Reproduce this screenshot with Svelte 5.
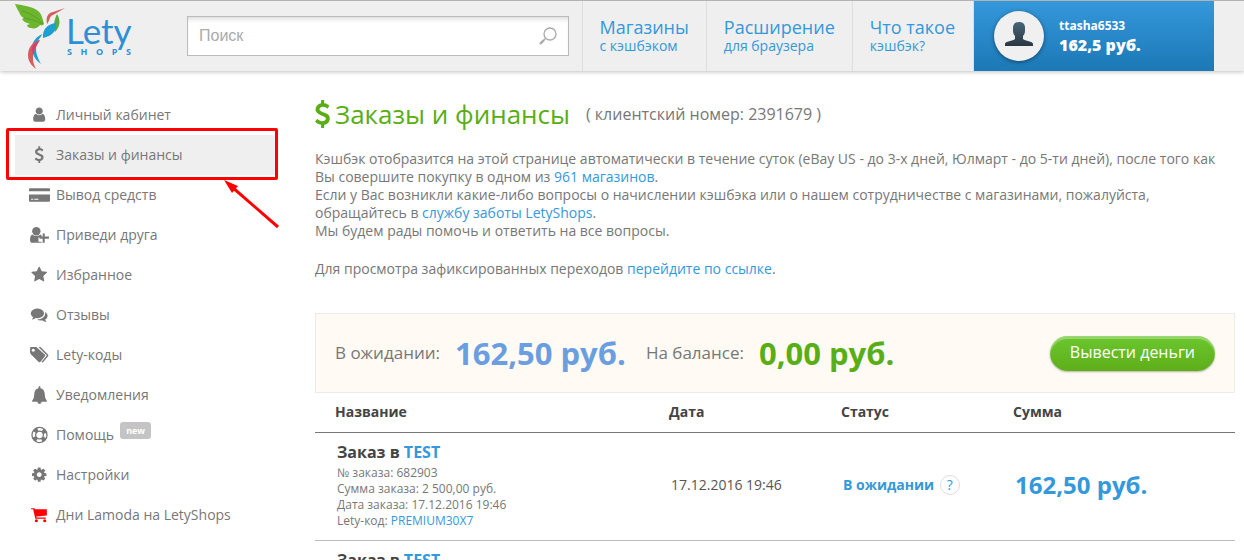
<script>
  const nav = [
    { title: "Магазины", note: "с кэшбэком" },
    { title: "Расширение", note: "для браузера" },
    { title: "Что такое", note: "кэшбэк?" }
  ];

  const menu = [
    { icon: "user", label: "Личный кабинет" },
    { icon: "dollar", label: "Заказы и финансы", active: true },
    { icon: "card", label: "Вывод средств" },
    { icon: "invite", label: "Приведи друга" },
    { icon: "star", label: "Избранное" },
    { icon: "comments", label: "Отзывы" },
    { icon: "tags", label: "Lety-коды" },
    { icon: "bell", label: "Уведомления" },
    { icon: "help", label: "Помощь", badge: "new" },
    { icon: "cog", label: "Настройки" },
    { icon: "cart", label: "Дни Lamoda на LetyShops" }
  ];

  const order = {
    shop: "TEST",
    number: "682903",
    total: "2 500,00 руб.",
    date: "17.12.2016 19:46",
    code: "PREMIUM30X7",
    status: "В ожидании",
    sum: "162,50 руб."
  };
  const orders = [order, order];

  let query = "";

  const dollarPath =
    "M1362 1185q0 153-99.5 263.5t-258.5 136.5v175q0 14-9 23t-23 9h-135q-13 0-22.5-9.5t-9.5-22.5v-175q-66-9-127.5-31t-101.5-44.5-74-48-46.5-37.5-17.5-18q-17-21-2-41l103-135q7-10 23-12 15-2 24 9l2 2q113 99 243 125 37 8 74 8 81 0 142.5-43t61.5-122q0-28-15-53t-33.5-42-58.5-37.5-66-32-80-32.5q-39-16-61.5-25t-61.5-26.5-62.5-31-56.5-35.5-53.5-42.5-43.5-49-35.5-58-21-66.5-8.5-78q0-138 98-242t255-134v-180q0-13 9.5-22.5t22.5-9.5h135q14 0 23 9t9 23v176q57 6 110.5 23t87 33.5 63.5 37.5 39 29 15 14q17 18 5 38l-81 146q-8 15-23 16-14 3-27-7-3-3-14.5-12t-39-26.5-58.5-32-74.5-26-85.5-11.5q-95 0-155 43t-60 111q0 26 8.5 48t29.5 41.5 39.5 33 56 31 60.5 27 70 27.5q53 20 81 31.5t76 35 75.5 42.5 62 50 53 63.5 31.5 76.5 13 94z";
  const userPath =
    "M1536 1399q0 109-62.5 187t-150.5 78h-854q-88 0-150.5-78t-62.5-187q0-85 8.5-160.5t31.5-152 58.5-131 94-89 134.5-34.5q131 128 313 128t313-128q76 0 134.5 34.5t94 89 58.5 131 31.5 152 8.5 160.5zm-256-887q0 159-112.5 271.5t-271.5 112.5-271.5-112.5-112.5-271.5 112.5-271.5 271.5-112.5 271.5 112.5 112.5 271.5z";
  const starPath =
    "M1728 647q0 22-26 48l-363 354 86 500q1 7 1 20 0 21-10.5 35.5t-30.5 14.5q-19 0-40-12l-449-236-449 236q-22 12-40 12-21 0-31.5-14.5t-10.5-35.5q0-6 2-20l86-500-364-354q-25-27-25-48 0-37 56-46l502-73 225-455q19-41 49-41t49 41l225 455 502 73q56 9 56 46z";
  const commentsPath =
    "M1408 768q0 139-94 257t-256.5 186.5-353.5 68.5q-86 0-176-16-124 88-278 128-36 9-86 16h-3q-11 0-20.5-8t-11.5-21q-1-3-1-6.5t.5-6.5 2-6l2.5-5 3.5-5.5 4-5 4.5-5 4-4.5q5-6 23-25t26-29.5 22.5-29 25-38.5 20.5-44q-124-72-195-177t-71-224q0-139 94-257t256.5-186.5 353.5-68.5 353.5 68.5 256.5 186.5 94 257zm384 256q0 120-71 224.5t-195 176.5q10 24 20.5 44t25 38.5 22.5 29 26 29.5 23 25q1 1 4 4.5t4.5 5 4 5 3.5 5.5l2.5 5 2 6 .5 6.5-1 6.5q-3 14-13 22t-22 7q-50-7-86-16-154-40-278-128-90 16-176 16-271 0-472-132 58 4 88 4 161 0 309-45t264-129q125-92 192-212t67-254q0-77-23-152 129 71 204 178t75 230z";
  const cogPath =
    "M1152 896q0-106-75-181t-181-75-181 75-75 181 75 181 181 75 181-75 75-181zm512-109v222q0 12-8 23t-20 13l-185 28q-19 54-39 91 35 50 107 138 10 12 10 25t-9 23q-27 37-99 108t-94 71q-12 0-26-9l-138-108q-44 23-91 38-16 136-29 186-7 28-36 28h-222q-14 0-24.5-8.5t-11.5-21.5l-28-184q-49-16-90-37l-141 107q-10 9-25 9-14 0-25-11-126-114-165-168-7-10-7-23 0-12 8-23 15-21 51-66.5t54-70.5q-27-50-41-99l-183-27q-13-2-21-12.5t-8-23.5v-222q0-12 8-23t19-13l186-28q14-46 39-92-40-57-107-138-10-12-10-24 0-10 9-23 26-36 98.5-107.5t94.5-71.5q13 0 26 10l138 107q44-23 91-38 16-136 29-186 7-28 36-28h222q14 0 24.5 8.5t11.5 21.5l28 184q49 16 90 37l142-107q9-9 24-9 13 0 25 10 129 119 165 170 7 8 7 22 0 12-8 23-15 21-51 66.5t-54 70.5q26 50 41 98l183 28q13 2 21 12.5t8 23.5z";
  const big = { user: userPath, dollar: dollarPath, star: starPath, comments: commentsPath, cog: cogPath };
</script>

<style>
  :global(body) {
    margin: 0;
    background: #fff;
    color: #777;
    font: 14px/18px "Open Sans", "Noto Sans", sans-serif;
  }
  a {
    color: #3498db;
    text-decoration: none;
  }
  header {
    display: flex;
    height: 70px;
    padding: 0 30px 0 14px;
    border-top: 1px solid #b4b2b2;
    background: #efefef;
    box-shadow: 0 1px 4px rgba(0, 0, 0, 0.25);
  }
  .logo {
    display: flex;
    width: 173px;
  }
  .logo-mark {
    width: 52px;
    height: 70px;
  }
  .logo-text {
    padding-top: 9px;
    color: #2d8fd5;
  }
  .lety {
    display: block;
    font: 35px/40px Lato, sans-serif;
  }
  .shops {
    display: flex;
    justify-content: space-between;
    width: 64px;
    padding-left: 1px;
    font: bold 9px/10px "Open Sans", sans-serif;
    margin-top: -3px;
  }
  .search {
    position: relative;
    flex: 1;
    margin: 15px 13px 0 0;
  }
  .search input {
    box-sizing: border-box;
    width: 100%;
    height: 40px;
    padding: 0 45px 0 11px;
    border: 1px solid #bbb;
    border-radius: 0;
    background: #fff;
    box-shadow: inset 0 5px 5px -3px rgba(0, 0, 0, 0.15);
    color: #777;
    font: 16px "Liberation Sans", Arial, sans-serif;
    outline: none;
  }
  .search input::placeholder {
    color: #aaa;
    opacity: 1;
  }
  .search button {
    position: absolute;
    top: 8px;
    right: 9px;
    width: 24px;
    height: 24px;
    padding: 0;
    border: 0;
    background: none;
  }
  nav {
    display: flex;
    padding-right: 1px;
    border-right: 1px solid #dedede;
  }
  nav a {
    box-sizing: border-box;
    padding: 16px 17px 0;
    border-left: 1px solid #dedede;
  }
  nav b {
    display: block;
    font-size: 18px;
    font-weight: normal;
    line-height: 20px;
  }
  .profile {
    display: flex;
    box-sizing: border-box;
    width: 240px;
    padding: 10px 20px;
    gap: 15px;
    background: linear-gradient(#3498db, #1c78b6);
    color: #fff;
    font-weight: bold;
  }
  .avatar {
    width: 50px;
    height: 50px;
    border-radius: 50%;
    background: #f0f0f0;
    box-shadow: 0 1px 4px rgba(0, 0, 0, 0.45);
  }
  .profile small {
    display: block;
    padding-top: 6px;
    font-size: 12px;
    line-height: 18px;
  }
  .profile strong {
    font-size: 16px;
    line-height: 20px;
  }

  .layout {
    display: grid;
    grid-template-columns: 260px minmax(0, 1fr);
    gap: 40px;
    padding: 24px 9px 0 15px;
  }
  aside ul {
    margin: 0;
    padding: 0;
    list-style: none;
  }
  aside li {
    position: relative;
  }
  aside li a {
    display: flex;
    align-items: center;
    height: 40px;
    padding-left: 14px;
    color: #777;
  }
  aside li.active a {
    background: #efefef;
  }
  aside svg {
    flex: none;
  }
  .icon {
    width: 21px;
    height: 21px;
    margin-right: 6px;
    fill: #777;
    overflow: visible;
  }
  .icon.cart {
    fill: #f00;
  }
  .badge {
    align-self: flex-start;
    margin: 7px 0 0 6px;
    padding: 0 6px;
    border-radius: 3px;
    background: #c4c4c4;
    color: #fff;
    font-size: 9px;
    font-weight: bold;
    line-height: 17px;
  }
  /* red marker drawn over the current item */
  .frame {
    position: absolute;
    inset: -7px -3px -5px -9px;
    border: 3px solid #f00;
    border-radius: 2px;
    pointer-events: none;
  }
  .arrow {
    position: absolute;
    top: 45px;
    right: -5px;
    pointer-events: none;
  }

  h1 {
    display: flex;
    align-items: center;
    margin: 0 0 17px;
    color: #59ae16;
    font-size: 26px;
    font-weight: normal;
    line-height: 38px;
  }
  h1 svg {
    margin-right: 5px;
    fill: #59ae16;
  }
  h1 small {
    margin-left: 16px;
    color: #777;
    font-size: 16px;
  }
  p {
    margin: 0 0 20px;
    padding-right: 18px;
  }
  .balance {
    display: flex;
    align-items: center;
    box-sizing: border-box;
    height: 80px;
    margin-top: 35px;
    padding: 0 19px;
    border: 1px solid #ebebeb;
    background: #fffaf4;
    font-size: 17px;
  }
  .balance strong {
    margin: 0 20px 0 15px;
    color: #6b9ee0;
    font-size: 31px;
    line-height: 40px;
  }
  .balance strong.ready {
    color: #59ae16;
  }
  .balance button {
    height: 35px;
    margin-left: auto;
    padding: 0 20px 2px;
    border: 0;
    border-radius: 18px;
    background: linear-gradient(#6cc72f, #5eae1a);
    box-shadow: inset 0 3px 1px rgba(255, 255, 255, 0.3), 0 1px 2px rgba(0, 0, 0, 0.3);
    color: #fff;
    font: 16px "Open Sans", "Noto Sans", sans-serif;
  }
  table {
    width: 100%;
    border-collapse: collapse;
    table-layout: fixed;
  }
  th {
    box-sizing: border-box;
    height: 39px;
    padding: 0 20px;
    border-bottom: 1px solid #777;
    color: #444;
    text-align: left;
  }
  th:first-child {
    width: 334px;
  }
  th:nth-child(2),
  th:nth-child(3) {
    width: 172px;
  }
  td {
    padding: 9px 0 11px 22px;
    border-bottom: 1px solid #bbb;
    color: #555;
    white-space: nowrap;
  }
  td h2 {
    margin: 0 0 2px;
    color: #444;
    font-size: 16px;
    line-height: 21px;
  }
  td div {
    color: #777;
    font-size: 12px;
    line-height: 16px;
  }
  .status {
    color: #3498db;
    font-weight: bold;
  }
  .status button {
    box-sizing: border-box;
    width: 20px;
    height: 20px;
    margin-left: 2px;
    padding: 0;
    border: 1px solid #ddd;
    border-radius: 50%;
    background: #fff;
    color: #3498db;
    font: 14px/18px "Open Sans", "Noto Sans", sans-serif;
  }
  .sum {
    color: #3498db;
    font-size: 24px;
    font-weight: bold;
  }
</style>

<header>
  <a class="logo" href="#home" aria-label="Lety Shops">
    <svg class="logo-mark" viewBox="0 0 52 70">
      <path fill="#6cb52d" d="M1 3c7 1 13 2 18 4 5 2 8 5 9 9l2 7c-1 1-2 2-4 1-2 3-6 4-9 3-2 0-4-1-4-3l3-1c-4-1-7-3-8-5l2-1c-3-1-4-4-5-6C3 8 2 5 1 3z" />
      <path fill="none" stroke="#4f9c2c" stroke-width=".8" d="M8 10c8 2 16 7 21 13M10 17c7 1 13 3 18 6" />
      <path fill="#d95c5c" d="M33 23c-1-6 0-11 6-12L51 7l-12 7c-4 1-3 6-6 9z" />
      <path fill="#57ad42" d="M43 13c4 6 3 13-2 18-2-5-1-12 2-18z" />
      <path fill="#1d9fd5" d="M42 22c1 8-4 13-13 15-1-9 5-14 13-15z" />
      <path fill="#1d9fd5" d="M28 33c-8 4-12 11-9 19 1 5 4 8 8 11-5-9-6-15-4-21 1-4 4-5 5-9z" />
      <path fill="#d95c5c" d="M26 39c-8 2-12 8-12 15 0 6 3 10 8 14-3-6-4-10-2-17 1-5 4-8 6-12z" />
      <path fill="#cf4467" d="M26 39c-5 2-9 6-8 12l2 3c0-6 3-11 6-15z" />
    </svg>
    <span class="logo-text">
      <span class="lety">Lety</span>
      <span class="shops"><span>S</span><span>H</span><span>O</span><span>P</span><span>S</span></span>
    </span>
  </a>
  <form class="search" on:submit|preventDefault>
    <input type="text" placeholder="Поиск" aria-label="Поиск" bind:value={query} />
    <button type="submit" aria-label="Найти">
      <svg width="24" height="24" fill="none" stroke="#aaa">
        <circle cx="14" cy="10" r="6" stroke-width="1.3" />
        <path d="M9.5 14.5L7.5 16.5" stroke-width="1.3" />
        <path d="M8 16l-4 4" stroke-width="2.4" />
      </svg>
    </button>
  </form>
  <nav>
    {#each nav as item}
      <a href="#nav"><b>{item.title}</b>{item.note}</a>
    {/each}
  </nav>
  <a class="profile" href="#profile">
    <svg class="avatar" viewBox="0 0 50 50">
      <defs>
        <linearGradient id="head" x2="0" y2="1">
          <stop stop-color="#47657a" />
          <stop offset="1" stop-color="#2b3741" />
        </linearGradient>
      </defs>
      <path fill="url(#head)" d="M25 11c4 0 6 2 6 6v3c0 2-1 4-2 5v3c2 2 10 2 10 5v2H11v-2c0-3 8-3 10-5v-3c-1-1-2-3-2-5v-3c0-4 2-6 6-6z" />
    </svg>
    <span><small>ttasha6533</small><strong>162,5 руб.</strong></span>
  </a>
</header>

<div class="layout">
  <aside>
    <ul>
      {#each menu as item}
        <li class:active={item.active}>
          <a href="#menu">
            {#if big[item.icon]}
              <svg class="icon" viewBox="-192 -128 2240 2240"><path d={big[item.icon]} /></svg>
            {:else if item.icon === "card"}
              <svg class="icon" viewBox="0 0 20 20">
                <path d="M1 3h18q1 0 1 1v2H0V4q0-1 1-1zM0 9h20v6q0 1-1 1H1q-1 0-1-1zm2 4v1h2v-1zm3 0v1h4v-1z" fill-rule="evenodd" />
              </svg>
            {:else if item.icon === "invite"}
              <svg class="icon" viewBox="0 0 20 20">
                <circle cx="7" cy="6" r="4" />
                <path d="M3 9q4 3 8 0l1 1v2H9v4h3v1H3q-2 0-2-3 0-4 2-5z" />
                <path d="M13 8h2v3h4v2h-4v4h-2v-4h-3v-2h3z" />
              </svg>
            {:else if item.icon === "tags"}
              <svg class="icon" viewBox="0 0 20 20">
                <path d="M2 2h5l8 7q1 1 0 2l-4 5q-1 1-2 0L2 9Q1 8 1 7V3q0-1 1-1zm2 1.500a1.500 1.500 0 1 0 .1 0z" fill-rule="evenodd" />
                <path d="M9 2h2l7 7q1 1 0 2l-5 6-1-1 5-6z" />
              </svg>
            {:else if item.icon === "bell"}
              <svg class="icon" viewBox="0 0 20 20">
                <path d="M10 1q1 0 1 2 4 1 4 6 0 4 2 6v1H3v-1q2-2 2-6 0-5 4-6 0-2 1-2zM8 16h4q0 2-2 2t-2-2z" />
              </svg>
            {:else if item.icon === "help"}
              <svg class="icon" viewBox="0 0 20 20">
                <g fill="none" stroke="#777">
                  <circle cx="10" cy="9.500" r="7.200" stroke-width="1.200" />
                  <circle cx="10" cy="9.500" r="3.700" stroke-width="1.200" />
                  <circle cx="10" cy="9.500" r="5.500" stroke-width="4" stroke-dasharray="3.800 4.840" stroke-dashoffset="-2.420" />
                </g>
              </svg>
            {:else}
              <svg class="icon cart" viewBox="0 0 20 20">
                <path d="M2 3h3l1 1h11v6L7 11v1h9v1H6L4 4H2z" />
                <circle cx="7" cy="15" r="1.500" />
                <circle cx="15" cy="15" r="1.500" />
              </svg>
            {/if}
            {item.label}
            {#if item.badge}<span class="badge">{item.badge}</span>{/if}
          </a>
          {#if item.active}
            <span class="frame"></span>
            <svg class="arrow" width="56" height="50">
              <path d="M8 7L54 47" stroke="#f00" stroke-width="3" />
              <path d="M0 0l14 6-6 7z" fill="#f00" />
            </svg>
          {/if}
        </li>
      {/each}
    </ul>
  </aside>

  <main>
    <h1>
      <svg width="15" height="28" viewBox="430 0 932 1792"><path d={dollarPath} /></svg>
      Заказы и финансы
      <small>( клиентский номер: 2391679 )</small>
    </h1>
    <p>
      Кэшбэк отобразится на этой странице автоматически в течение суток (eBay US - до 3-х дней,
      Юлмарт - до 5-ти дней), после того как Вы совершите покупку в одном из
      <a href="#shops">961 магазинов</a>.<br />
      Если у Вас возникли какие-либо вопросы о начислении кэшбэка или о нашем сотрудничестве с
      магазинами, пожалуйста, обращайтесь в <a href="#support">службу заботы LetyShops</a>.<br />
      Мы будем рады помочь и ответить на все вопросы.
    </p>
    <p>Для просмотра зафиксированных переходов <a href="#clicks">перейдите по ссылке</a>.</p>

    <section class="balance">
      <span>В ожидании:</span>
      <strong>162,50 руб.</strong>
      <span>На балансе:</span>
      <strong class="ready">0,00 руб.</strong>
      <button type="button">Вывести деньги</button>
    </section>

    <table>
      <thead>
        <tr><th>Название</th><th>Дата</th><th>Статус</th><th>Сумма</th></tr>
      </thead>
      <tbody>
        {#each orders as row}
          <tr>
            <td>
              <h2>Заказ в <a href="#shop">{row.shop}</a></h2>
              <div>№ заказа: {row.number}</div>
              <div>Сумма заказа: {row.total}</div>
              <div>Дата заказа: {row.date}</div>
              <div>Lety-код: <a href="#code">{row.code}</a></div>
            </td>
            <td>{row.date}</td>
            <td class="status">{row.status} <button type="button">?</button></td>
            <td class="sum">{row.sum}</td>
          </tr>
        {/each}
      </tbody>
    </table>
  </main>
</div>
